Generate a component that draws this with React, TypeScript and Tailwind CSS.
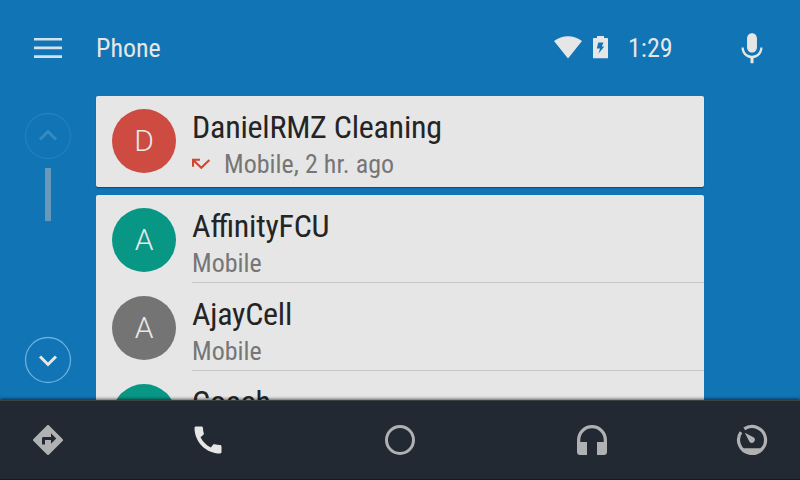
import React from "react";

const FONT = "font-['Roboto_Condensed','Roboto',sans-serif] [font-stretch:75%]";

type Contact = { name: string; detail: string; initial: string; color: string; missed?: boolean };

const recent: Contact = {
  name: "DanielRMZ Cleaning",
  detail: "Mobile, 2 hr. ago",
  initial: "D",
  color: "bg-[#cd4b40]",
  missed: true,
};

const contacts: Contact[] = [
  { name: "AffinityFCU", detail: "Mobile", initial: "A", color: "bg-[#089685]" },
  { name: "AjayCell", detail: "Mobile", initial: "A", color: "bg-[#747474]" },
  { name: "Coach", detail: "", initial: "", color: "bg-[#089685]" },
];

function MissedCall() {
  return (
    <svg width="20" height="14" viewBox="0 0 20 14" className="mr-3 shrink-0" fill="none" stroke="#d2452f" strokeWidth="2.100">
      <path d="M1 9.800V2.800H8M1.400 3.200L9.300 10.800L17.400 3" />
    </svg>
  );
}

function Row({ contact, divider }: { contact: Contact; divider?: boolean }) {
  return (
    <div className="flex h-[88px] shrink-0 pl-4">
      <div className={`flex size-16 shrink-0 items-center justify-center rounded-full ${contact.color}`}>
        <span className="font-['Roboto'] text-[30px] leading-[64px] font-light text-[#e8e8e8] [font-stretch:100%]">
          {contact.initial}
        </span>
      </div>
      <div className={`ml-4 h-[75px] grow whitespace-nowrap ${divider ? "border-b border-[#c8c8c8]" : ""}`}>
        <div className="text-[32px] leading-9 tracking-[-0.23px] text-[#242424] [font-feature-settings:'liga']">
          {contact.name}
        </div>
        <div className="flex h-[38px] items-center text-[26px] leading-[38px] tracking-[0.03px] text-[#767676]">
          {contact.missed && <MissedCall />}
          <span>{contact.detail}</span>
        </div>
      </div>
    </div>
  );
}

function Chevron({ up }: { up?: boolean }) {
  return (
    <svg width="48" height="48" viewBox="0 0 48 48" fill="none">
      <circle cx="24" cy="24" r="22.500" stroke={up ? "#2480bc" : "#68afdf"} strokeWidth="1.300" />
      <path
        d={up ? "M16 27.500L24 19.500L32 27.500" : "M16 20.500L24 28.500L32 20.500"}
        stroke={up ? "#368ac2" : "#e6e6e6"}
        strokeWidth="3"
      />
    </svg>
  );
}

function Header() {
  return (
    <header className="flex h-24 shrink-0 items-center text-[26px] leading-8 text-[#e6e6e6]">
      <div className="flex w-24 justify-center">
        <svg width="28" height="22" viewBox="0 0 28 22" stroke="#d3e1ec" strokeWidth="2.600">
          <path d="M0 2.200H28M0 10.900H28M0 19.600H28" />
        </svg>
      </div>
      <span className="grow">Phone</span>
      <svg width="28" height="23" viewBox="0 0 28 23" fill="#e6e6e6" className="mr-[11px] mb-px">
        <path d="M14 22.500L0 5C4.200 1.800 9 .2 14 .2S23.800 1.800 28 5Z" />
      </svg>
      <svg width="15" height="23" viewBox="0 0 15 23" className="mr-5 mb-px">
        <path d="M4 0H11V2H14.200Q15 2 15 3V22.300H0V3Q0 2 .8 2H4Z" fill="#e6e6e6" />
        <path d="M5.300 6.500H10.500L8.800 10.600H11.300L5.600 17.500L7 12.500H3.800Z" fill="#1174b5" />
      </svg>
      <span className="w-[76px]">1:29</span>
      <div className="flex w-24 justify-center">
        <svg width="36" height="38" viewBox="0 0 24 24" preserveAspectRatio="none" fill="#e6e6e6">
          <path d="M12 14.900c1.900 0 3.300-1.500 3.300-3.400V6c0-1.900-1.400-3.300-3.300-3.300S8.700 4.100 8.700 6V11.500c0 1.900 1.400 3.400 3.300 3.400zm5.500-3.200c0 3-2.600 5.200-5.500 5.200S6.500 14.700 6.500 11.700H5c0 3.500 2.700 6.300 6 6.800V21.700h2v-3.200c3.300-.5 6-3.300 6-6.800z" />
        </svg>
      </div>
    </header>
  );
}

function Tab({ children, className }: { children: React.ReactNode; className: string }) {
  return (
    <button className={`flex h-full items-center justify-center ${className}`}>
      <svg width="36" height="36" viewBox="0 0 36 36" fill="#b0b1b2">
        {children}
      </svg>
    </button>
  );
}

function NavBar() {
  return (
    <nav className="relative flex h-20 shrink-0 border-t border-b border-t-[#3a4443] border-b-[#171720] bg-[#222932] shadow-[0_-1px_3px_rgba(0,0,0,0.6)]">
      <Tab className="w-24">
        <path
          transform="scale(1.5)"
          d="M21.710 11.290l-9-9c-.39-.39-1.020-.39-1.410 0l-9 9c-.39.39-.39 1.020 0 1.410l9 9c.39.39 1.020.39 1.410 0l9-9c.39-.38.39-1.010 0-1.410zM14 14.500V12h-4v3H8v-4c0-.55.45-1 1-1h5V7.500l3.500 3.500-3.500 3.500z"
        />
      </Tab>
      <Tab className="w-56">
        <path
          transform="scale(1.5)"
          fill="#e6e6e6"
          d="M20.010 15.380c-1.230 0-2.420-.2-3.530-.56-.35-.12-.74-.03-1.010.24l-1.570 1.970c-2.830-1.350-5.480-3.900-6.890-6.830l1.950-1.660c.27-.28.35-.67.24-1.020-.37-1.110-.56-2.300-.56-3.530 0-.54-.45-.99-.99-.99H4.190C3.650 3 3 3.240 3 3.990 3 13.280 10.730 21 20.010 21c.71 0 .99-.63.99-1.180v-3.450c0-.54-.45-.99-.99-.99z"
        />
      </Tab>
      <Tab className="w-40">
        <circle cx="18" cy="18" r="13.500" fill="none" stroke="#b0b1b2" strokeWidth="3" />
      </Tab>
      <Tab className="w-56">
        <path d="M18 3A15 15 0 0 0 3 18V29.700Q3 33 6.300 33H13V20H6.300V18A11.700 11.700 0 0 1 29.700 18V20H23V33H29.700Q33 33 33 29.700V18A15 15 0 0 0 18 3Z" />
      </Tab>
      <Tab className="w-24">
        <path d="M10.300 6.900A13.500 13.500 0 1 1 7 10.200" fill="none" stroke="#b0b1b2" strokeWidth="3.200" />
        <path d="M7.500 26.300H28.500A14 14 0 0 1 7.500 26.300Z" />
        <path d="M10.800 10.800L19.900 15.600A3 3 0 1 1 15.600 19.900Z" />
      </Tab>
    </nav>
  );
}

export default function App() {
  return (
    <div className={`flex h-[480px] w-[800px] flex-col overflow-hidden bg-[#1174b5] ${FONT}`}>
      <Header />
      <div className="flex h-[304px] shrink-0">
        <aside className="flex w-24 flex-col items-center pt-4">
          <Chevron up />
          <div className="mt-2 h-[53px] w-1.5 bg-[#6899b9]" />
          <div className="mt-[115px]">
            <Chevron />
          </div>
        </aside>
        <main className="flex w-[608px] flex-col gap-2">
          <section className="h-[91px] shrink-0 rounded-[2px] bg-[#e6e6e6] pt-[13px] shadow-[0_1px_1px_rgba(0,0,0,0.35)]">
            <Row contact={recent} />
          </section>
          <section className="h-[205px] shrink-0 overflow-hidden rounded-t-[2px] bg-[#e6e6e6] pt-[13px]">
            {contacts.map((c) => (
              <Row key={c.name} contact={c} divider />
            ))}
          </section>
        </main>
      </div>
      <NavBar />
    </div>
  );
}
